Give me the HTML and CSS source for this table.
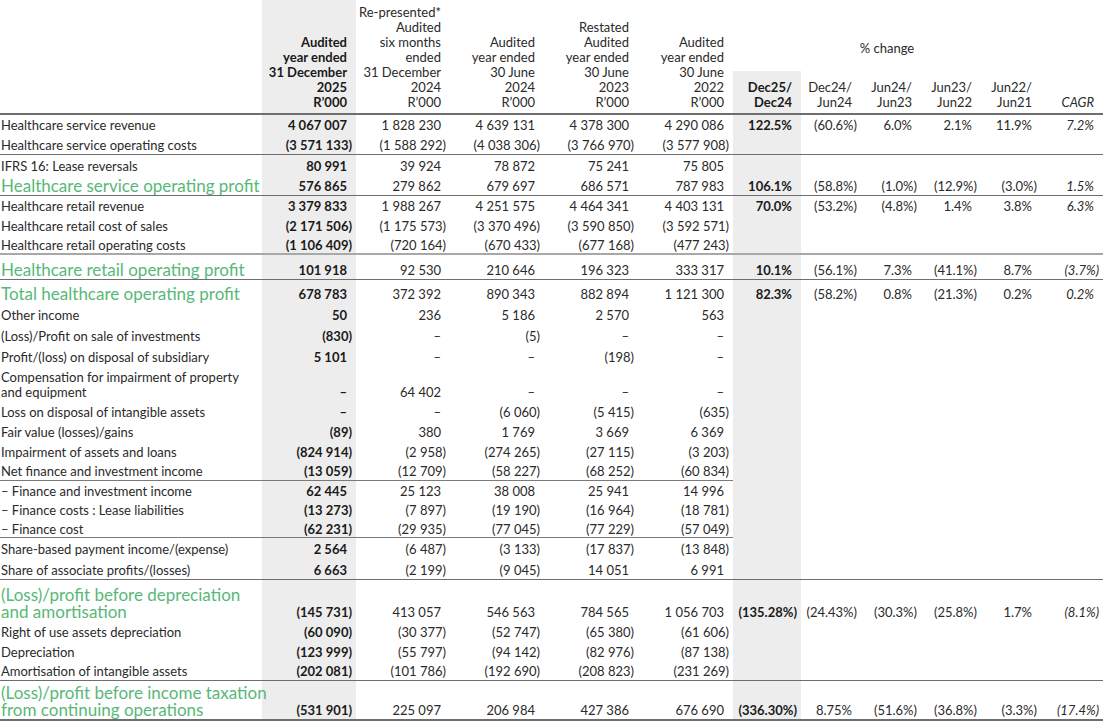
FILE: index.html
```html
<!DOCTYPE html>
<html lang="en">
<head>
<meta charset="utf-8">
<title>Healthcare results</title>
<link rel="stylesheet" href="styles.css">
</head>
<body>
<table class="fin">
<colgroup>
<col class="c-lbl"><col class="c-yr"><col class="c-yr"><col class="c-yr"><col class="c-yr"><col class="c-yr5"><col class="c-d"><col class="c-p"><col class="c-p"><col class="c-p"><col class="c-p"><col class="c-cagr">
</colgroup>
<thead>
<tr class="ha">
<th class="lbl hd" rowspan="2"></th>
<th class="s b hd" rowspan="2">Audited<br>year ended<br>31 December<br>2025<br>R’000</th>
<th class="hd" rowspan="2">Re-presented*<br>Audited<br>six months<br>ended<br>31 December<br>2024<br>R’000</th>
<th class="hd" rowspan="2">Audited<br>year ended<br>30 June<br>2024<br>R’000</th>
<th class="hd" rowspan="2">Restated<br>Audited<br>year ended<br>30 June<br>2023<br>R’000</th>
<th class="hd" rowspan="2">Audited<br>year ended<br>30 June<br>2022<br>R’000</th>
<th class="pc" colspan="5">% change</th>
<th></th>
</tr>
<tr class="hb">
<th class="s b hd">Dec25/<br>Dec24</th>
<th class="hd">Dec24/<br>Jun24</th>
<th class="hd">Jun24/<br>Jun23</th>
<th class="hd">Jun23/<br>Jun22</th>
<th class="hd">Jun22/<br>Jun21</th>
<th class="hd it">CAGR</th>
</tr>
</thead>
<tbody>
<tr class="h20"><td class="lbl">Healthcare service revenue</td><td class="s b">4 067 007</td><td>1 828 230</td><td>4 639 131</td><td>4 378 300</td><td>4 290 086</td><td class="s b">122.5%</td><td class="neg">(60.6%)</td><td>6.0%</td><td>2.1%</td><td>11.9%</td><td class="it">7.2%</td></tr>
<tr class="h20 line"><td class="lbl">Healthcare service operating costs</td><td class="s b neg">(3 571 133)</td><td class="neg">(1 588 292)</td><td class="neg">(4 038 306)</td><td class="neg">(3 766 970)</td><td class="neg">(3 577 908)</td><td class="s"></td><td></td><td></td><td></td><td></td><td></td></tr>
<tr class="h21"><td class="lbl">IFRS 16: Lease reversals</td><td class="s b">80 991</td><td>39 924</td><td>78 872</td><td>75 241</td><td>75 805</td><td class="s"></td><td></td><td></td><td></td><td></td><td></td></tr>
<tr class="h20 line g"><td class="lbl">Healthcare service operating profit</td><td class="s b">576 865</td><td>279 862</td><td>679 697</td><td>686 571</td><td>787 983</td><td class="s b">106.1%</td><td class="neg">(58.8%)</td><td class="neg">(1.0%)</td><td class="neg">(12.9%)</td><td class="neg">(3.0%)</td><td class="it">1.5%</td></tr>
<tr class="h20"><td class="lbl">Healthcare retail revenue</td><td class="s b">3 379 833</td><td>1 988 267</td><td>4 251 575</td><td>4 464 341</td><td>4 403 131</td><td class="s b">70.0%</td><td class="neg">(53.2%)</td><td class="neg">(4.8%)</td><td>1.4%</td><td>3.8%</td><td class="it">6.3%</td></tr>
<tr class="h20"><td class="lbl">Healthcare retail cost of sales</td><td class="s b neg">(2 171 506)</td><td class="neg">(1 175 573)</td><td class="neg">(3 370 496)</td><td class="neg">(3 590 850)</td><td class="neg">(3 592 571)</td><td class="s"></td><td></td><td></td><td></td><td></td><td></td></tr>
<tr class="h19 tight line-soft"><td class="lbl">Healthcare retail operating costs</td><td class="s b neg">(1 106 409)</td><td class="neg">(720 164)</td><td class="neg">(670 433)</td><td class="neg">(677 168)</td><td class="neg">(477 243)</td><td class="s"></td><td></td><td></td><td></td><td></td><td></td></tr>
<tr class="h25 line g"><td class="lbl">Healthcare retail operating profit</td><td class="s b">101 918</td><td>92 530</td><td>210 646</td><td>196 323</td><td>333 317</td><td class="s b">10.1%</td><td class="neg">(56.1%)</td><td>7.3%</td><td class="neg">(41.1%)</td><td>8.7%</td><td class="it neg">(3.7%)</td></tr>
<tr class="h24 g"><td class="lbl">Total healthcare operating profit</td><td class="s b">678 783</td><td>372 392</td><td>890 343</td><td>882 894</td><td>1 121 300</td><td class="s b">82.3%</td><td class="neg">(58.2%)</td><td>0.8%</td><td class="neg">(21.3%)</td><td>0.2%</td><td class="it">0.2%</td></tr>
<tr class="h21"><td class="lbl">Other income</td><td class="s b">50</td><td>236</td><td>5 186</td><td>2 570</td><td>563</td><td class="s"></td><td></td><td></td><td></td><td></td><td></td></tr>
<tr class="h21"><td class="lbl">(Loss)/Profit on sale of investments</td><td class="s b neg">(830)</td><td>–</td><td class="neg">(5)</td><td>–</td><td>–</td><td class="s"></td><td></td><td></td><td></td><td></td><td></td></tr>
<tr class="h21"><td class="lbl">Profit/(loss) on disposal of subsidiary</td><td class="s b">5 101</td><td>–</td><td>–</td><td class="neg">(198)</td><td>–</td><td class="s"></td><td></td><td></td><td></td><td></td><td></td></tr>
<tr class="h35"><td class="lbl">Compensation for impairment of property<br>and equipment</td><td class="s b">–</td><td>64 402</td><td>–</td><td>–</td><td>–</td><td class="s"></td><td></td><td></td><td></td><td></td><td></td></tr>
<tr class="h20"><td class="lbl">Loss on disposal of intangible assets</td><td class="s b">–</td><td>–</td><td class="neg">(6 060)</td><td class="neg">(5 415)</td><td class="neg">(635)</td><td class="s"></td><td></td><td></td><td></td><td></td><td></td></tr>
<tr class="h20"><td class="lbl">Fair value (losses)/gains</td><td class="s b neg">(89)</td><td>380</td><td>1 769</td><td>3 669</td><td>6 369</td><td class="s"></td><td></td><td></td><td></td><td></td><td></td></tr>
<tr class="h20"><td class="lbl">Impairment of assets and loans</td><td class="s b neg">(824 914)</td><td class="neg">(2 958)</td><td class="neg">(274 265)</td><td class="neg">(27 115)</td><td class="neg">(3 203)</td><td class="s"></td><td></td><td></td><td></td><td></td><td></td></tr>
<tr class="h19 line-part"><td class="lbl">Net finance and investment income</td><td class="s b neg">(13 059)</td><td class="neg">(12 709)</td><td class="neg">(58 227)</td><td class="neg">(68 252)</td><td class="neg">(60 834)</td><td class="s"></td><td></td><td></td><td></td><td></td><td></td></tr>
<tr class="h19 tight"><td class="lbl">– Finance and investment income</td><td class="s b">62 445</td><td>25 123</td><td>38 008</td><td>25 941</td><td>14 996</td><td class="s"></td><td></td><td></td><td></td><td></td><td></td></tr>
<tr class="h19 tight"><td class="lbl">– Finance costs : Lease liabilities</td><td class="s b neg">(13 273)</td><td class="neg">(7 897)</td><td class="neg">(19 190)</td><td class="neg">(16 964)</td><td class="neg">(18 781)</td><td class="s"></td><td></td><td></td><td></td><td></td><td></td></tr>
<tr class="h19 tight line-part"><td class="lbl">– Finance cost</td><td class="s b neg">(62 231)</td><td class="neg">(29 935)</td><td class="neg">(77 045)</td><td class="neg">(77 229)</td><td class="neg">(57 049)</td><td class="s"></td><td></td><td></td><td></td><td></td><td></td></tr>
<tr class="h21"><td class="lbl">Share-based payment income/(expense)</td><td class="s b">2 564</td><td class="neg">(6 487)</td><td class="neg">(3 133)</td><td class="neg">(17 837)</td><td class="neg">(13 848)</td><td class="s"></td><td></td><td></td><td></td><td></td><td></td></tr>
<tr class="h21 line"><td class="lbl">Share of associate profits/(losses)</td><td class="s b">6 663</td><td class="neg">(2 199)</td><td class="neg">(9 045)</td><td>14 051</td><td>6 991</td><td class="s"></td><td></td><td></td><td></td><td></td><td></td></tr>
<tr class="h42 g g2"><td class="lbl">(Loss)/profit before depreciation<br>and amortisation</td><td class="s b neg">(145 731)</td><td>413 057</td><td>546 563</td><td>784 565</td><td>1 056 703</td><td class="s b neg">(135.28%)</td><td class="neg">(24.43%)</td><td class="neg">(30.3%)</td><td class="neg">(25.8%)</td><td>1.7%</td><td class="it neg">(8.1%)</td></tr>
<tr class="h20"><td class="lbl">Right of use assets depreciation</td><td class="s b neg">(60 090)</td><td class="neg">(30 377)</td><td class="neg">(52 747)</td><td class="neg">(65 380)</td><td class="neg">(61 606)</td><td class="s"></td><td></td><td></td><td></td><td></td><td></td></tr>
<tr class="h20"><td class="lbl">Depreciation</td><td class="s b neg">(123 999)</td><td class="neg">(55 797)</td><td class="neg">(94 142)</td><td class="neg">(82 976)</td><td class="neg">(87 138)</td><td class="s"></td><td></td><td></td><td></td><td></td><td></td></tr>
<tr class="h19 line"><td class="lbl">Amortisation of intangible assets</td><td class="s b neg">(202 081)</td><td class="neg">(101 786)</td><td class="neg">(192 690)</td><td class="neg">(208 823)</td><td class="neg">(231 269)</td><td class="s"></td><td></td><td></td><td></td><td></td><td></td></tr>
<tr class="h40 g g2 line-end"><td class="lbl">(Loss)/profit before income taxation<br>from continuing operations</td><td class="s b neg">(531 901)</td><td>225 097</td><td>206 984</td><td>427 386</td><td>676 690</td><td class="s b neg">(336.30%)</td><td>8.75%</td><td class="neg">(51.6%)</td><td class="neg">(36.8%)</td><td class="neg">(3.3%)</td><td class="it neg">(17.4%)</td></tr>
</tbody>
</table>
</body>
</html>
```

FILE: styles.css
```css
body {
  margin: 0;
  background: #ffffff;
  color: #2a2a2a;
  font-family: Lato, "Open Sans", sans-serif;
}

.fin {
  border-collapse: collapse;
  table-layout: fixed;
  width: 1103px;
  font-size: 13px;
  line-height: 15px;
}

.c-lbl { width: 262px; }
.c-yr { width: 94px; }
.c-yr5 { width: 95px; }
.c-d { width: 68px; }
.c-p { width: 60px; }
.c-cagr { width: 62px; }

.fin th,
.fin td {
  padding: 0 9px 1px 0;
  text-align: right;
  vertical-align: bottom;
  white-space: nowrap;
  font-weight: 400;
}

.fin .lbl {
  text-align: left;
  padding-left: 1px;
  white-space: normal;
}

.fin .s { background: #ededed; }
.fin .b { font-weight: 700; color: #1a1a1a; }
.fin .neg { padding-right: 4px; }
.fin .it { font-style: italic; }

.ha { height: 71px; }
.hb { height: 43px; }
.fin th.hd { padding-bottom: 3px; border-bottom: 2px solid #6e6e6e; }
.fin th.pc { text-align: center; padding: 0 0 15px 0; }

.h19 { height: 19px; }
.h20 { height: 20px; }
.h21 { height: 21px; }
.h24 { height: 24px; }
.h25 { height: 25px; }
.h35 { height: 35px; }
.h40 { height: 40px; }
.h42 { height: 42px; }

.fin .tight td { padding-bottom: 0; }

.line td { border-bottom: 1px solid #6e6e6e; }
.line-soft td { border-bottom: 2px solid #a8a8a8; }
.line-part td:nth-child(-n+6) { border-bottom: 1px solid #7a7a7a; }
.line-end td { border-bottom: 2px solid #6e6e6e; }

.g .lbl {
  color: #58b878;
  font-size: 17px;
  line-height: 16px;
  white-space: nowrap;
}

.g2 .lbl { line-height: 17px; }
```
